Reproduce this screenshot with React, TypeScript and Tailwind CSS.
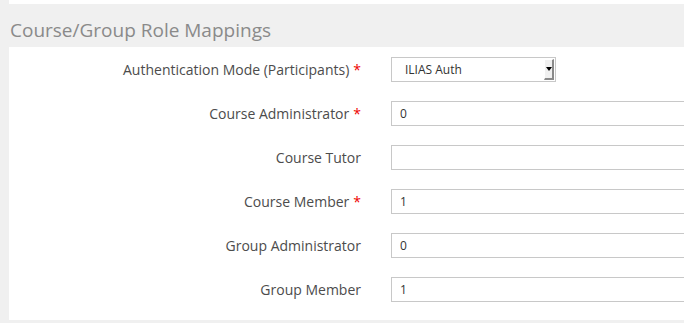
const rows: { label: string; required: boolean; value: string }[] = [
  { label: 'Course Administrator', required: true, value: '0' },
  { label: 'Course Tutor', required: false, value: '' },
  { label: 'Course Member', required: true, value: '1' },
  { label: 'Group Administrator', required: false, value: '0' },
  { label: 'Group Member', required: false, value: '1' },
];

function Label({ text, required }: { text: string; required: boolean }) {
  return (
    <div className="w-[352px] shrink-0 text-right text-[14px] text-[#4c4c4c]">
      {text}
      {required && <span className="text-[#e00] ml-[4px]">*</span>}
    </div>
  );
}

export default function App() {
  return (
    <div
      className="w-[684px] h-[323px] bg-[#f0f0f0] flex overflow-hidden"
      style={{ fontFamily: '"Open Sans", "Liberation Sans", sans-serif' }}
    >
      <div className="w-[9px] shrink-0" />
      <div className="flex-1 flex flex-col">
        <div className="h-[4px] bg-white shrink-0" />
        {/* Section header */}
        <div className="h-[43px] shrink-0 bg-[#f0f0f0] -ml-[9px] pl-[10px] flex items-end pb-[5px]">
          <h2 className="text-[19px] leading-[24px] text-[#8a8a8a]">Course/Group Role Mappings</h2>
        </div>

        {/* Form rows */}
        <div className="flex-1 bg-white pt-[10px] flex flex-col gap-[19px]">
          <div className="flex items-center h-[25px]">
            <Label text="Authentication Mode (Participants)" required />
            <div className="ml-[30px] w-[165px] h-[25px] border border-[#c8c8c8] bg-white flex items-center justify-between">
              <span className="pl-[13px] text-[12px] text-[#333]">ILIAS Auth</span>
              <div className="w-[10px] h-[21px] mr-[1px] bg-[#f0f0f0] border-r-2 border-b-2 border-[#8a8a8a] border-l border-t border-l-[#fff] border-t-[#fff] flex items-center justify-center">
                <svg width="6" height="4" viewBox="0 0 6 4">
                  <path d="M0 0 H6 L3 4 Z" fill="#000" />
                </svg>
              </div>
            </div>
          </div>
          {rows.map((r) => (
            <div key={r.label} className="flex items-center h-[25px]">
              <Label text={r.label} required={r.required} />
              <div className="ml-[30px] flex-1 h-[25px] border border-[#c8c8c8] border-r-0 bg-white flex items-center pl-[8px] text-[12px] text-[#333]">
                {r.value}
              </div>
            </div>
          ))}
        </div>
        <div className="h-[3px] shrink-0" />
      </div>
    </div>
  );
}
